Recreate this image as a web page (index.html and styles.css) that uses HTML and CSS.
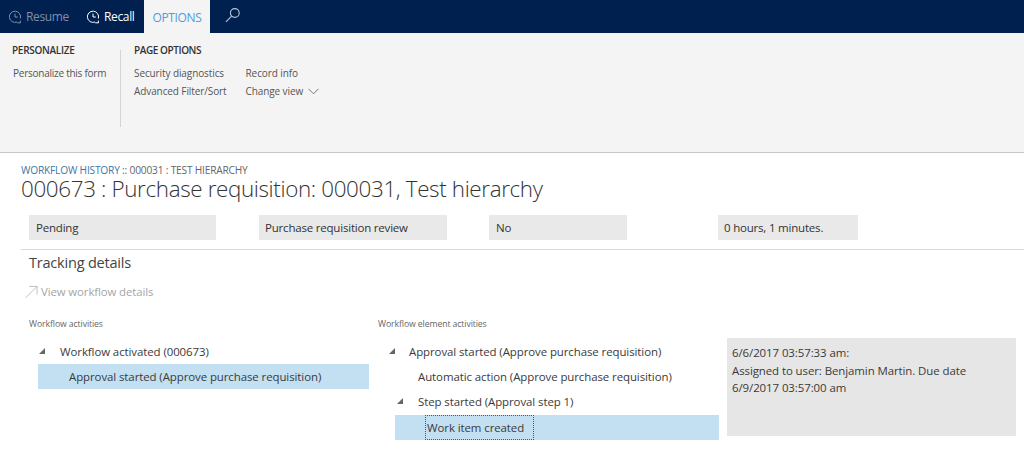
FILE: index.html
```html
<!DOCTYPE html>
<html lang="en">
<head>
<meta charset="utf-8">
<title>Workflow history</title>
<link rel="stylesheet" href="styles.css">
</head>
<body>
<nav class="topbar">
  <div class="cmd cmd-dim">
    <svg class="ico" viewBox="0 0 14 14"><path d="M9 12A5.6 5.6 0 1 1 12.3 8.5M7 3.6V7H9.8M9.2 12.8H12.6M12.4 10.6V12.8"/></svg>
    <span>Resume</span>
  </div>
  <div class="cmd cmd-on">
    <svg class="ico" viewBox="0 0 14 14"><path d="M9 12A5.6 5.6 0 1 1 12.3 8.5M7 3.6V7H9.8M9.2 12.8H12.6M12.4 10.6V12.8"/></svg>
    <span>Recall</span>
  </div>
  <div class="tab">OPTIONS</div>
  <svg class="search" viewBox="0 0 16 16"><circle cx="9.8" cy="6" r="4.4"/><path d="M6.6 9.2L1 14.8"/></svg>
</nav>
<section class="ribbon">
  <div class="group group-first">
    <h2 class="group-title">PERSONALIZE</h2>
    <div class="link">Personalize this form</div>
  </div>
  <div class="group group-page">
    <h2 class="group-title">PAGE OPTIONS</h2>
    <div class="link-cols">
      <div class="link-col">
        <div class="link">Security diagnostics</div>
        <div class="link">Advanced Filter/Sort</div>
      </div>
      <div class="link-col">
        <div class="link">Record info</div>
        <div class="link">Change view
          <svg class="chev" viewBox="0 0 11 7"><path d="M.5 .8L5.5 5.8L10.5 .8"/></svg>
        </div>
      </div>
    </div>
  </div>
</section>
<main class="content">
  <div class="crumb"><span class="crumb-link">WORKFLOW HISTORY</span> :: 000031 : TEST HIERARCHY</div>
  <h1 class="title">000673 : Purchase requisition: 000031, Test hierarchy</h1>
  <div class="fields">
    <div class="field f1">Pending</div>
    <div class="field f2">Purchase requisition review</div>
    <div class="field f3">No</div>
    <div class="field f4">0 hours, 1 minutes.</div>
  </div>
  <h2 class="section">Tracking details</h2>
  <div class="action">
    <svg class="arrow" viewBox="0 0 14 14"><path d="M.5 13.5L13 1M4.5 1H13V9.5"/></svg>
    <span>View workflow details</span>
  </div>
  <div class="panes">
    <div class="pane pane-a">
      <div class="pane-label">Workflow activities</div>
      <div class="row row-a"><i class="tri"></i>Workflow activated (000673)</div>
      <div class="row row-a2 sel">Approval started (Approve purchase requisition)</div>
    </div>
    <div class="pane pane-b">
      <div class="pane-label">Workflow element activities</div>
      <div class="row row-b"><i class="tri"></i>Approval started (Approve purchase requisition)</div>
      <div class="row row-b2">Automatic action (Approve purchase requisition)</div>
      <div class="row row-b3"><i class="tri"></i>Step started (Approval step 1)</div>
      <div class="row row-b4 sel"><span class="focus">Work item created</span></div>
    </div>
    <div class="note">6/6/2017 03:57:33 am:<br>Assigned to user: Benjamin Martin. Due date<br>6/9/2017 03:57:00 am</div>
  </div>
</main>
</body>
</html>
```
FILE: styles.css
```css
* { box-sizing: border-box; }
html, body { margin: 0; padding: 0; }
body {
  width: 1024px;
  height: 475px;
  overflow: hidden;
  background: #fff;
  color: #333;
  font-family: "Open Sans", "Noto Sans", sans-serif;
  font-size: 11px;
}
.topbar {
  display: flex;
  align-items: center;
  height: 33px;
  background: #002050;
  color: #fff;
  font-size: 12px;
  letter-spacing: -.35px;
}
.cmd { display: flex; align-items: center; gap: 4px; }
.cmd-dim { margin-left: 8px; color: #7f8fa8; width: 78px; }
.cmd-on { width: 58px; }
.ico { width: 14px; height: 14px; fill: none; stroke: currentColor; stroke-width: 1; }
.tab {
  align-self: stretch;
  width: 66px;
  background: #f4f4f4;
  color: #4f9bdc;
  text-align: center;
  line-height: 36px;
}
.search { width: 16px; height: 16px; margin-left: 15px; margin-top: -3px; fill: none; stroke: #b9c4d6; stroke-width: 1.1; }
.ribbon {
  display: flex;
  height: 120px;
  background: #f4f4f4;
  border-bottom: 1px solid #c8c8c8;
  padding-top: 10px;
  font-size: 10px;
  letter-spacing: -.1px;
}
.group-title {
  margin: 0 0 7px;
  font-size: 10px;
  line-height: 14px;
  font-weight: 600;
  color: #333;
  letter-spacing: -.3px;
}
.group-first { width: 120px; padding-left: 12px; }
.group-first .link { padding-left: 1px; letter-spacing: -.25px; }
.group-page {
  padding-left: 13px;
  border-left: 1px solid #d4d4d4;
  height: 77px;
  margin-top: 7px;
}
.group-page .group-title { margin-top: -7px; letter-spacing: -.42px; }
.link { line-height: 18px; color: #555; white-space: nowrap; }
.link-cols { display: flex; gap: 19px; }
.chev { width: 11px; height: 7px; margin-left: 2px; fill: none; stroke: #666; stroke-width: .9; }
.content { padding: 11px 0 0 21px; }
.crumb { font-size: 10.2px; line-height: 12px; color: #666; letter-spacing: -.2px; }
.crumb-link { color: #3c78a8; }
.title {
  margin: 0;
  font-size: 22.4px;
  line-height: 26px;
  font-weight: 300;
  color: #333;
  letter-spacing: -.35px;
}
.fields {
  display: flex;
  margin-top: 13px;
  padding: 0 0 9px 8px;
  border-bottom: 1px solid #d9d9d9;
}
.field {
  height: 25px;
  line-height: 25px;
  padding-left: 7px;
  background: #e9e9e9;
  font-size: 11.5px;
  letter-spacing: -.2px;
}
.f1 { width: 187px; margin-right: 43px; }
.f2 { width: 188px; padding-left: 6px; margin-right: 42px; }
.f3 { width: 138px; margin-right: 91px; }
.f4 { width: 140px; padding-left: 6px; }
.section {
  margin: 3px 0 0 8px;
  font-size: 14.5px;
  line-height: 19px;
  font-weight: 400;
  color: #444;
  letter-spacing: -.2px;
}
.action {
  display: flex;
  align-items: center;
  gap: 3px;
  margin: 12px 0 0 4px;
  color: #a6a6a6;
  font-size: 11.4px;
  letter-spacing: -.1px;
  line-height: 16px;
}
.arrow { width: 13px; height: 14px; fill: none; stroke: #b5b5b5; stroke-width: .9; }
.panes { display: flex; margin-top: 18px; }
.pane-label { font-size: 8.7px; line-height: 12px; color: #666; letter-spacing: -.1px; margin-bottom: 9px; }
.pane-a { width: 357px; padding-left: 8px; }
.pane-b { width: 349px; }
.row {
  position: relative;
  height: 25px;
  line-height: 25px;
  font-size: 11.45px;
  letter-spacing: -.08px;
  color: #3a3a3a;
  white-space: nowrap;
}
.sel { background: #c3dff2; }
.row-a { margin-left: 9px; padding-left: 22px; }
.row-a2 { margin-left: 9px; width: 331px; padding-left: 31px; }
.row-b { padding-left: 31px; }
.row-b2 { padding-left: 40px; }
.row-b3 { padding-left: 40px; }
.row-b4 { margin: 1px 0 0 17px; width: 324px; padding-left: 30px; }
.focus {
  display: inline-block;
  width: 109px;
  height: 25px;
  line-height: 23px;
  padding-left: 1px;
  border: 1px dotted #44576b;
  vertical-align: top;
}
.tri {
  position: absolute;
  top: 9px;
  width: 0;
  height: 0;
  border-style: solid;
  border-width: 0 0 6px 6px;
  border-color: transparent transparent #666 transparent;
}
.row-a .tri { left: 1px; }
.row-b .tri { left: 11px; }
.row-b3 .tri { left: 19px; }
.note {
  align-self: flex-start;
  width: 289px;
  height: 98px;
  margin-top: 20px;
  padding: 6px 5px;
  background: #e6e6e6;
  font-size: 11.45px;
  line-height: 17.5px;
  letter-spacing: -.08px;
  color: #3a3a3a;
}
```
